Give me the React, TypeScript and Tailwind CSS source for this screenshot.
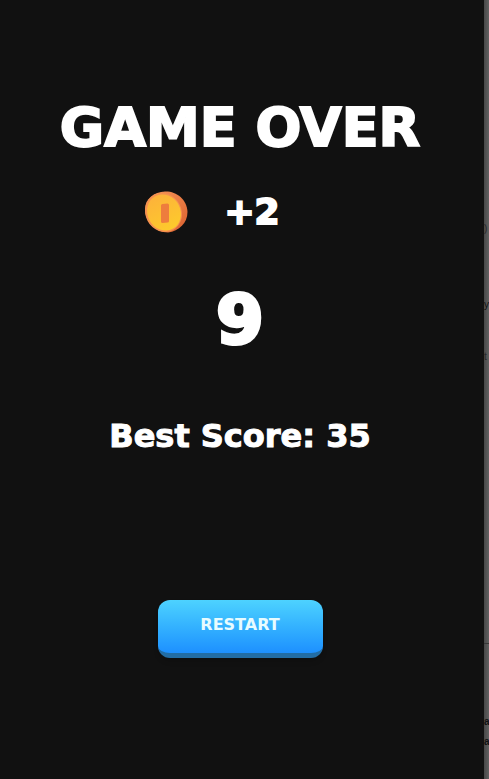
import React, { useState } from 'react';

const Coin: React.FC = () => (
  <svg className="h-11 w-11" viewBox="0 0 44 44" aria-hidden="true">
    <defs>
      <linearGradient id="edge" x1="0" y1="0" x2="1" y2="1">
        <stop offset="0" stopColor="#f99a5c" />
        <stop offset="1" stopColor="#d95f2e" />
      </linearGradient>
      <linearGradient id="face" x1="0" y1="0" x2="0" y2="1">
        <stop offset="0" stopColor="#fdb33a" />
        <stop offset="1" stopColor="#fdca2c" />
      </linearGradient>
    </defs>
    {/* Coin body and its thick right edge */}
    <path d="M21 1.500C32 1 43 9 43.500 22C43.500 33 35 41 24 42.500C11 42 1 32 1 19C1 9 10 2 21 1.500Z" fill="url(#edge)" />
    <ellipse cx="19.500" cy="22.500" rx="18" ry="20" transform="rotate(-28 19.500 22.500)" fill="#f5914f" />
    <ellipse cx="20" cy="22.500" rx="16.500" ry="18.500" transform="rotate(-28 20 22.500)" fill="url(#face)" />
    {/* Slot */}
    <path d="M17 15.500Q17 14 18.500 14L23.500 13.500Q25 13.500 25 15V31Q25 32.500 23.500 32.500L18.500 33Q17 33 17 31.500Z" fill="#ee7d3d" />
  </svg>
);

const App: React.FC = () => {
  const [score, setScore] = useState(9);
  const bestScore = 35;
  const coins = 2;

  return (
    <div className="flex min-h-screen bg-[#111111] font-['DejaVu_Sans',sans-serif] font-bold text-white">
      <main className="flex min-w-0 flex-1 flex-col items-center pt-24 pr-1 pb-8">
        <h1 className="text-center text-[54px] leading-16 whitespace-nowrap [-webkit-text-stroke:2px_white]">GAME OVER</h1>

        {/* Coins earned in this run */}
        <div className="mt-5 flex h-16 items-center justify-center gap-9 pr-14">
          <Coin />
          <span className="text-[36px] leading-10 whitespace-nowrap [-webkit-text-stroke:2px_white]">+{coins}</span>
        </div>

        <p className="mt-9 text-[68px] leading-20 [-webkit-text-stroke:4px_white]">{score}</p>

        <p className="mt-14 text-[32px] leading-10 whitespace-nowrap [-webkit-text-stroke:1px_white]">Best Score: {bestScore}</p>

        <button
          type="button"
          onClick={() => setScore(0)}
          className="mt-36 h-[58px] w-[165px] rounded-xl border-b-[5px] border-[#226da5] bg-linear-to-b from-[#4dd2ff] to-[#1e90ff] pb-1 text-base text-[#e8fcff] shadow-md"
        >
          RESTART
        </button>
      </main>

      {/* Dimmed page behind the game */}
      <aside className="w-[5px] shrink-0 bg-linear-to-r from-[#484848] to-[#626262] font-['Liberation_Sans',sans-serif] text-[10px] leading-5 font-normal text-[#292929]">
        <p className="mt-[219px]">)</p>
        <p className="mt-14 text-[#111111]">y</p>
        <p className="mt-8">t</p>
        <hr className="mt-[276px] border-[#383838]" />
        <p className="mt-17 font-bold text-[#111111]">a</p>
        <p className="font-bold text-[#111111]">a</p>
      </aside>
    </div>
  );
};

export default App;
